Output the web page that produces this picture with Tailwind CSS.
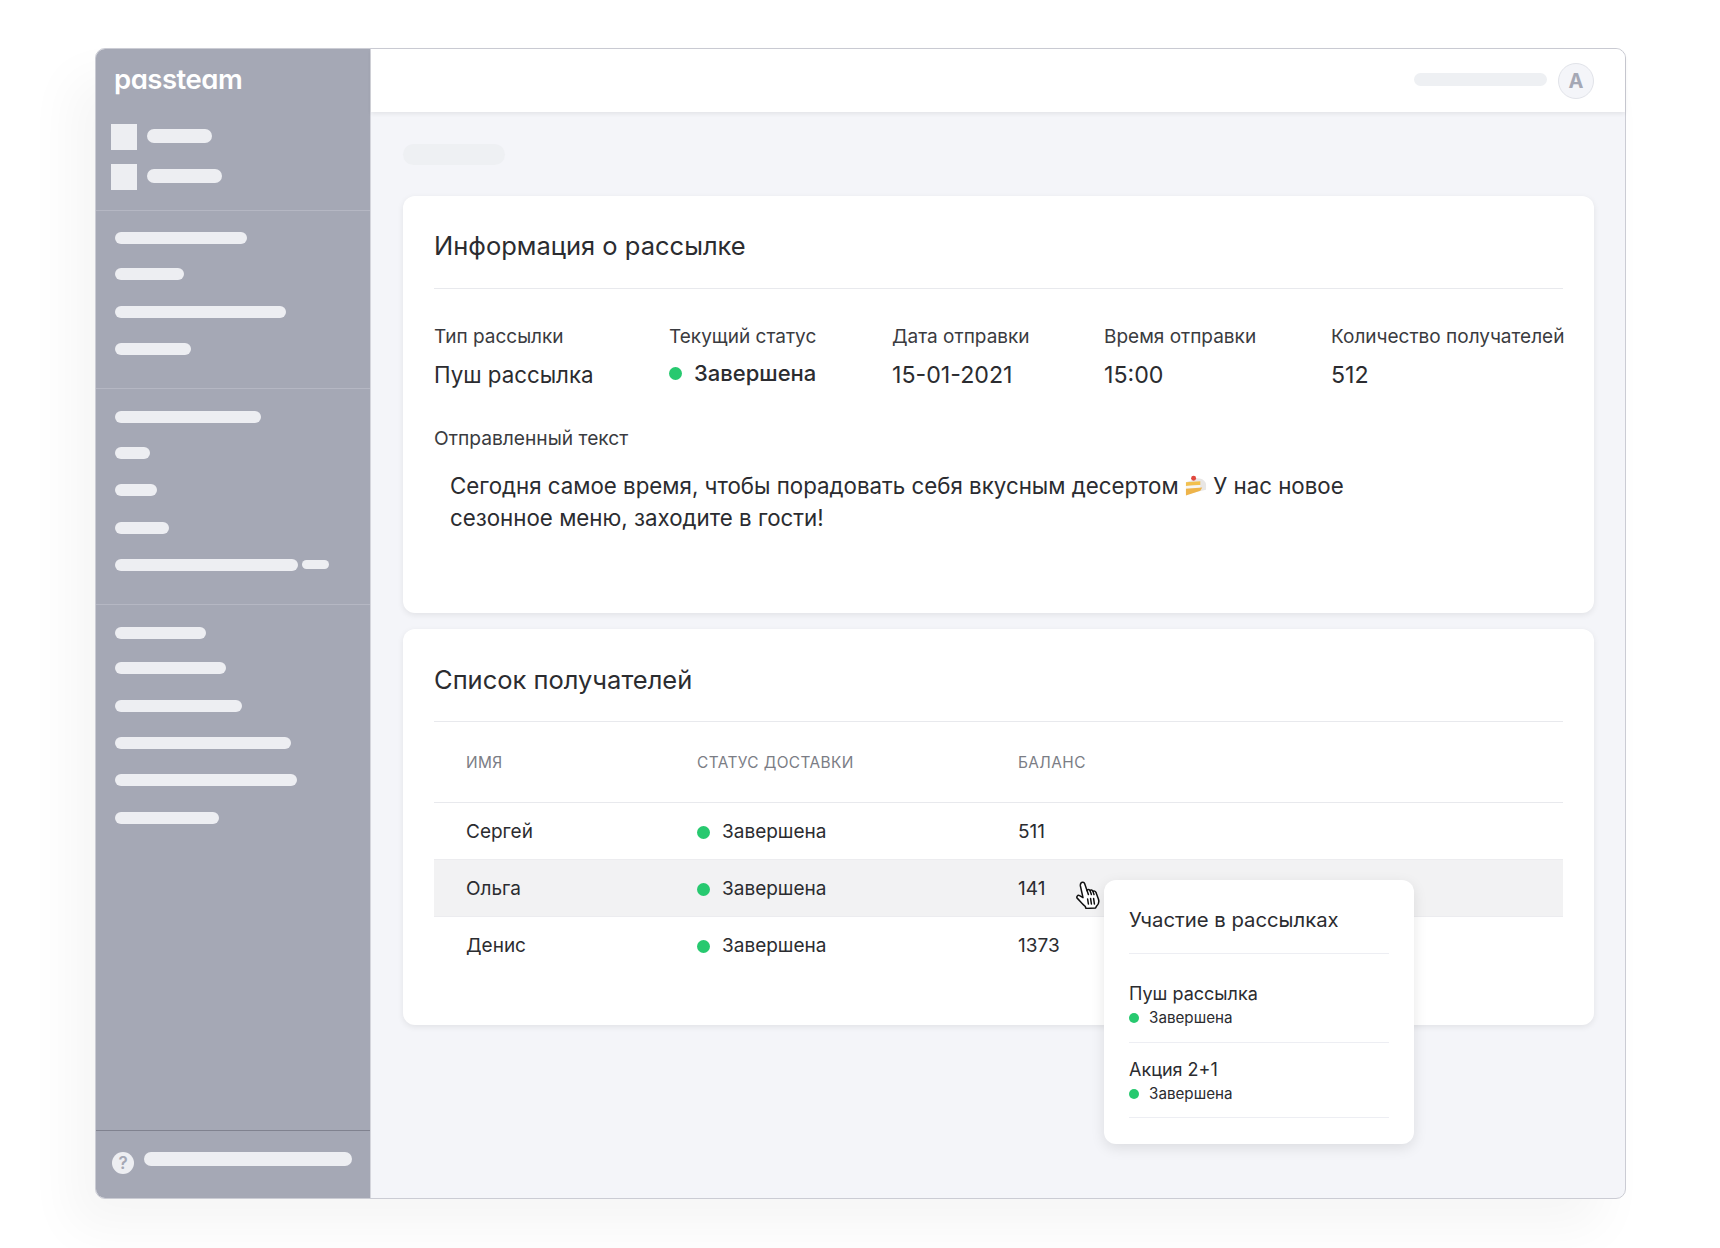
<!DOCTYPE html>
<html lang="en">

<head>
    <meta charset="UTF-8">
    <title>Passteam</title>
    <script src="https://cdn.jsdelivr.net/npm/@tailwindcss/browser@4"></script>
</head>

<body class="bg-white font-[Inter,sans-serif] text-[#2b2c30]">
    <div class="w-[1720px] h-[1248px] pt-[48px] pl-[95px] overflow-hidden">
        <!-- window -->
        <div class="relative flex w-[1531px] h-[1151px] rounded-[10px] border border-[#cbccd4] bg-[#f4f5f9] shadow-[-24px_30px_50px_rgba(0,0,0,0.04)]">

            <!-- sidebar -->
            <aside class="flex flex-col w-[274px] bg-[#a5a8b5] rounded-l-[9px]">
                <div class="h-[75px] pl-[18px] pt-[13px] text-[27.5px] leading-[34px] font-semibold tracking-[-0.5px] text-white [font-feature-settings:'cv11']">passteam</div>
                <div class="flex flex-col gap-[14px] pl-[15px] pb-[20px] border-b border-[#b5b7c3]">
                    <div class="flex items-center gap-[10px]">
                        <div class="w-[26px] h-[26px] bg-[#edeef2]"></div>
                        <div class="w-[65px] h-[14px] mb-[2px] rounded-full bg-[#edeef2]"></div>
                    </div>
                    <div class="flex items-center gap-[10px]">
                        <div class="w-[26px] h-[26px] bg-[#edeef2]"></div>
                        <div class="w-[75px] h-[14px] mb-[2px] rounded-full bg-[#edeef2]"></div>
                    </div>
                </div>
                <div class="flex flex-col gap-[25.3px] pl-[19px] pt-[21px] pb-[33px] border-b border-[#b5b7c3]">
                    <div class="w-[132px] h-[12px] mb-[-1px] rounded-full bg-[#edeef2]"></div>
                    <div class="w-[69px] h-[12px] rounded-full bg-[#edeef2]"></div>
                    <div class="w-[171px] h-[12px] rounded-full bg-[#edeef2]"></div>
                    <div class="w-[76px] h-[12px] rounded-full bg-[#edeef2]"></div>
                </div>
                <div class="flex flex-col gap-[25.3px] pl-[19px] pt-[22px] pb-[33px] border-b border-[#b5b7c3]">
                    <div class="w-[146px] h-[12px] mb-[-1px] rounded-full bg-[#edeef2]"></div>
                    <div class="w-[35px] h-[12px] rounded-full bg-[#edeef2]"></div>
                    <div class="w-[42px] h-[12px] rounded-full bg-[#edeef2]"></div>
                    <div class="w-[54px] h-[12px] rounded-full bg-[#edeef2]"></div>
                    <div class="flex gap-[4px]">
                        <div class="w-[183px] h-[12px] rounded-full bg-[#edeef2]"></div>
                        <div class="w-[27px] h-[9px] mt-[1px] rounded-full bg-[#edeef2]"></div>
                    </div>
                </div>
                <div class="flex flex-col gap-[25.3px] pl-[19px] pt-[22px]">
                    <div class="w-[91px] h-[12px] mb-[-2px] rounded-full bg-[#edeef2]"></div>
                    <div class="w-[111px] h-[12px] rounded-full bg-[#edeef2]"></div>
                    <div class="w-[127px] h-[12px] rounded-full bg-[#edeef2]"></div>
                    <div class="w-[176px] h-[12px] rounded-full bg-[#edeef2]"></div>
                    <div class="w-[182px] h-[12px] rounded-full bg-[#edeef2]"></div>
                    <div class="w-[104px] h-[12px] rounded-full bg-[#edeef2]"></div>
                </div>
                <div class="mt-auto h-[68px] flex items-start gap-[10px] pl-[16px] pt-[21px] border-t border-[#80828f]">
                    <div class="flex items-center justify-center w-[22px] h-[22px] rounded-full bg-[#edeef2] text-[#a5a8b5] text-[17px] leading-none font-semibold">?</div>
                    <div class="w-[208px] h-[14px] rounded-full bg-[#edeef2]"></div>
                </div>
            </aside>

            <!-- main -->
            <div class="flex-1 flex flex-col min-w-0 border-l border-[#d4d5dc]">
                <header class="flex items-center justify-end h-[63px] pr-[31px] gap-[11px] bg-white rounded-tr-[9px] shadow-[0_2px_4px_rgba(0,0,0,0.07)]">
                    <div class="w-[133px] h-[13px] mb-[2px] rounded-full bg-[#eef0f3]"></div>
                    <div class="flex items-center justify-center w-[36px] h-[36px] mt-[1px] rounded-full border border-[#e1e3e9] bg-[#f4f5f9] text-[#a5a8b5] text-[20px] font-bold">A</div>
                </header>

                <main class="pt-[32px] pl-[32px] pr-[31px]">
                    <div class="w-[102px] h-[21px] mb-[31px] rounded-full bg-[#eef0f3]"></div>

                    <!-- info card -->
                    <section class="h-[417px] px-[31px] pt-[32px] mb-[16px] bg-white rounded-[12px] shadow-[0_2px_6px_rgba(0,0,0,0.08)]">
                        <h2 class="pb-[24px] text-[25.5px] leading-[36px] border-b border-[#e8e9ed]">Информация о рассылке</h2>
                        <div class="grid grid-cols-[235px_223px_212px_227px_1fr] mt-[36px] whitespace-nowrap">
                            <div>
                                <div class="text-[19px] leading-[24px] text-[#3a3b40]">Тип рассылки</div>
                                <div class="mt-[10px] text-[22.3px] leading-[32px]">Пуш рассылка</div>
                            </div>
                            <div>
                                <div class="text-[19px] leading-[24px] text-[#3a3b40]">Текущий статус</div>
                                <div class="flex items-center gap-[12px] mt-[9px] text-[22px] leading-[30px] font-medium">
                                    <span class="w-[13px] h-[13px] rounded-full bg-[#27c96f]"></span>Завершена
                                </div>
                            </div>
                            <div>
                                <div class="text-[19px] leading-[24px] text-[#3a3b40]">Дата отправки</div>
                                <div class="mt-[10px] text-[23.2px] leading-[32px]">15-01-2021</div>
                            </div>
                            <div>
                                <div class="text-[19px] leading-[24px] text-[#3a3b40]">Время отправки</div>
                                <div class="mt-[10px] text-[23.2px] leading-[32px]">15:00</div>
                            </div>
                            <div>
                                <div class="text-[19px] leading-[24px] text-[#3a3b40]">Количество получателей</div>
                                <div class="mt-[10px] text-[23.2px] leading-[32px]">512</div>
                            </div>
                        </div>
                        <div class="mt-[35px] text-[19.2px] leading-[24px] text-[#3a3b40]">Отправленный текст</div>
                        <p class="w-[920px] mt-[20px] pl-[16px] text-[22.3px] leading-[32px]">
                            Сегодня самое время, чтобы порадовать себя вкусным десертом
                            <svg class="inline-block w-[22px] h-[22px] align-[-3px]" viewBox="0 0 23 22">
                                <path d="M1 7 L13 3 C18 3 22 6 22 10 L22 15 L1 20 Z" fill="#e8e6e4" />
                                <path d="M1 7 L16 6 L16 10 L1 11 Z" fill="#f2c04e" />
                                <path d="M1 11 L16 10 L16 13 L1 14 Z" fill="#f8f6f2" />
                                <path d="M1 14 L18 12.5 L16 16 L1 21 Z" fill="#eeb44a" />
                                <circle cx="9" cy="3" r="2.6" fill="#e0483e" />
                            </svg>
                            У нас новое сезонное меню, заходите в гости!
                        </p>
                    </section>

                    <!-- recipients card -->
                    <section class="h-[396px] px-[31px] pt-[33px] bg-white rounded-[12px] shadow-[0_2px_6px_rgba(0,0,0,0.08)]">
                        <h2 class="pb-[23px] text-[25.5px] leading-[36px] border-b border-[#e8e9ed]">Список получателей</h2>
                        <div class="grid grid-cols-[231px_321px_1fr] items-center h-[81px] pt-[2px] pl-[32px] border-b border-[#e8e9ed] text-[15.4px] tracking-[0.4px] uppercase text-[#7b7d85]">
                            <div>Имя</div>
                            <div>Статус доставки</div>
                            <div>Баланс</div>
                        </div>
                        <div class="grid grid-cols-[231px_321px_1fr] items-center h-[56px] pt-[2px] pl-[32px] text-[19px]">
                            <div>Сергей</div>
                            <div class="flex items-center gap-[12px]"><span class="w-[13px] h-[13px] rounded-full bg-[#27c96f]"></span>Завершена</div>
                            <div>511</div>
                        </div>
                        <div class="grid grid-cols-[231px_321px_1fr] items-center h-[58px] pt-[2px] pl-[32px] text-[19px] bg-[#f2f2f3] border-y border-[#ececef]">
                            <div>Ольга</div>
                            <div class="flex items-center gap-[12px]"><span class="w-[13px] h-[13px] rounded-full bg-[#27c96f]"></span>Завершена</div>
                            <div>141</div>
                        </div>
                        <div class="grid grid-cols-[231px_321px_1fr] items-center h-[57px] pt-[2px] pl-[32px] text-[19px]">
                            <div>Денис</div>
                            <div class="flex items-center gap-[12px]"><span class="w-[13px] h-[13px] rounded-full bg-[#27c96f]"></span>Завершена</div>
                            <div>1373</div>
                        </div>
                    </section>
                </main>
            </div>

            <!-- hand cursor -->
            <svg class="absolute left-[979px] top-[832px] w-[25px] h-[28px]" viewBox="0 0 25 28" fill="#fff" stroke="#111" stroke-width="1.5" stroke-linejoin="round" stroke-linecap="round">
                <path d="M6 2 C7 0.6 9 1 9.6 2.6 L12 9.5 C12.4 8 14.6 8 15 9.6 C15.6 8.6 17.6 8.8 18 10.4 C18.8 9.6 20.6 10 21 11.6 L23.4 18 C24.4 21 23 24 21.4 25.4 L20.6 27 L11 27.4 L10.2 25.4 C8 24 5 20 2.4 17.4 C1 16 2.6 13.6 4.6 14.6 L8 16.6 L5.4 5 C5.2 4 5.4 3 6 2 Z" />
                <path d="M12 9.5 L13.4 13.6 M15 9.6 L16.4 13.6 M18 10.4 L19 13.6" fill="none" />
                <path d="M12.6 18 L13.4 23 M15.6 17.6 L16.4 23 M18.6 17.4 L19.4 23" fill="none" stroke-width="1.5" />
            </svg>

            <!-- popover -->
            <div class="absolute left-[1008px] top-[831px] w-[310px] h-[264px] px-[25px] pt-[24px] bg-white rounded-[12px] shadow-[0_4px_14px_rgba(0,0,0,0.1)]">
                <div class="pb-[17px] text-[20.3px] leading-[32px] border-b border-[#edeef3]">Участие в рассылках</div>
                <div class="pt-[28px] pb-[14px] border-b border-[#edeef3]">
                    <div class="text-[18px] leading-[24px]">Пуш рассылка</div>
                    <div class="flex items-center gap-[10px] mt-[2px] text-[15.2px] leading-[20px]"><span class="w-[10px] h-[10px] rounded-full bg-[#27c96f]"></span>Завершена</div>
                </div>
                <div class="pt-[15px] pb-[13px] border-b border-[#edeef3]">
                    <div class="text-[18px] leading-[24px]">Акция 2+1</div>
                    <div class="flex items-center gap-[10px] mt-[2px] text-[15.2px] leading-[20px]"><span class="w-[10px] h-[10px] rounded-full bg-[#27c96f]"></span>Завершена</div>
                </div>
            </div>
        </div>
    </div>
</body>

</html>
